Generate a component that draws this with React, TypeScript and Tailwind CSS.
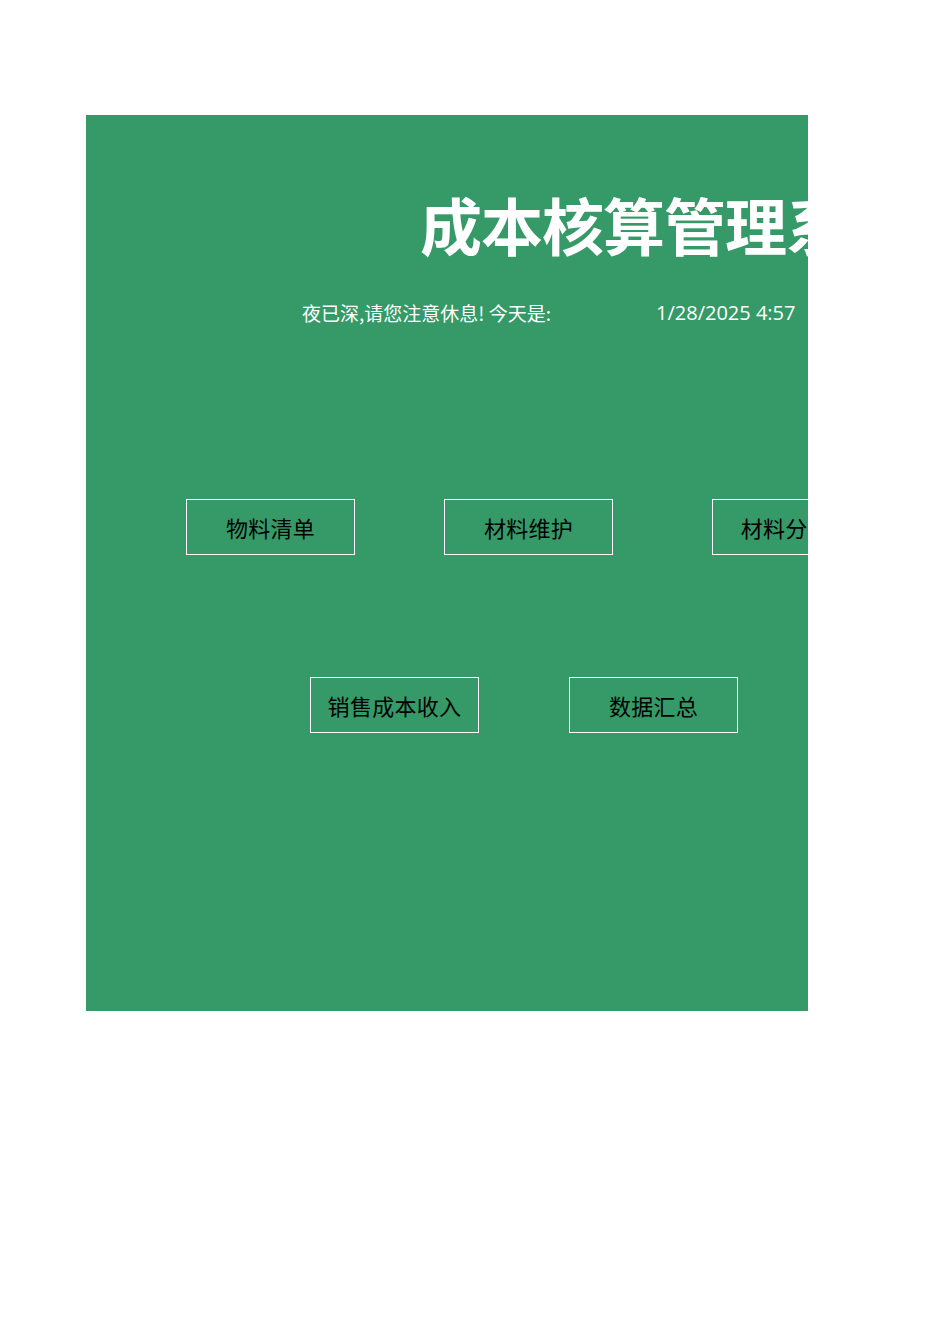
const cjk = { fontFamily: '"Noto Sans CJK SC", "Noto Sans", sans-serif' };

function NavButton({ label }: { label: string }) {
  return (
    <div className="w-[169px] h-[56px] shrink-0 border border-white flex items-center justify-center text-[22px] text-black whitespace-nowrap tracking-[0.3px]">
      {label}
    </div>
  );
}

export default function App() {
  return (
    <div className="w-[950px] h-[1344px] bg-white pt-[115px] pl-[86px]" style={cjk}>
      <div className="w-[722px] h-[896px] bg-[#359a68] overflow-hidden flex flex-col">
        {/* title */}
        <div className="mt-[78px] pl-[334px] h-[62px] flex items-center whitespace-nowrap text-white font-bold text-[62px] leading-none tracking-[-1px]">
          成本核算管理系统
        </div>

        {/* greeting + date */}
        <div className="mt-[46px] flex items-center h-[24px] text-white text-[19px] whitespace-nowrap">
          <span className="pl-[216px] w-[570px]">夜已深,请您注意休息! 今天是:</span>
          <span style={{ fontFamily: '"Open Sans", "Noto Sans", sans-serif' }} className="text-[20px]">
            1/28/2025 4:57
          </span>
        </div>

        {/* first row of buttons */}
        <div className="mt-[174px] flex pl-[100px]">
          <NavButton label="物料清单" />
          <div className="w-[89px] shrink-0" />
          <NavButton label="材料维护" />
          <div className="w-[99px] shrink-0" />
          <NavButton label="材料分析表" />
        </div>

        {/* second row of buttons */}
        <div className="mt-[122px] flex pl-[224px]">
          <NavButton label="销售成本收入" />
          <div className="w-[90px] shrink-0" />
          <NavButton label="数据汇总" />
        </div>
      </div>
    </div>
  );
}
